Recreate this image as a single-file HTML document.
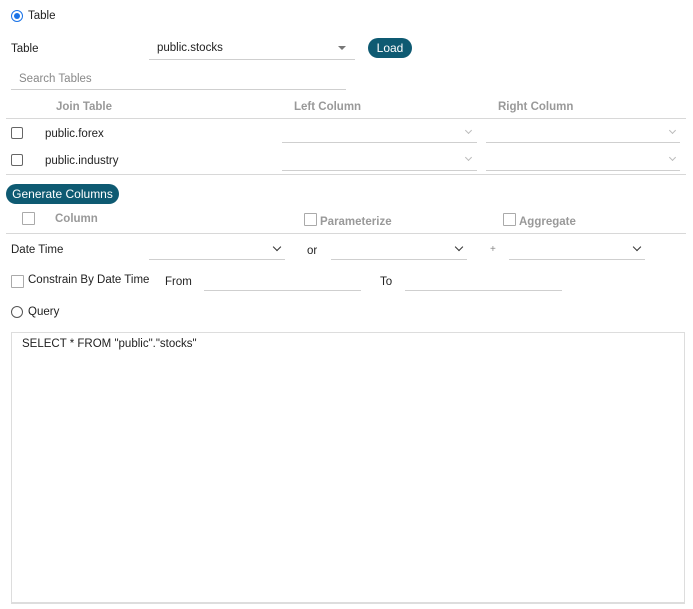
<!DOCTYPE html>
<html><head><style>
body{margin:0;width:693px;height:609px;background:#fff;font-family:"Liberation Sans",sans-serif;font-size:11.5px;color:#222;position:relative;overflow:hidden}
.a{position:absolute;white-space:nowrap;line-height:14px}
.l{position:absolute;height:1px;background:#d8d8d8}
.ul{position:absolute;height:1px;background:#cfcfcf}
.cb{position:absolute;width:10px;height:10px;border:1px solid #666;border-radius:2px;background:#fff}
.cbg{position:absolute;width:11px;height:11px;border:1px solid #aaa;border-radius:1px}
.h{color:#999;font-weight:bold}
.btn{position:absolute;background:#0e5a72;color:#fff;border-radius:10px;text-align:center;font-size:12px;line-height:20px}
.chev{position:absolute;width:5px;height:5px;border-right:1.5px solid #333;border-bottom:1.5px solid #333;transform:rotate(45deg)}
.chl{position:absolute;width:4px;height:4px;border-right:1px solid #bbb;border-bottom:1px solid #bbb;transform:rotate(45deg)}
</style></head><body>
<div style="position:absolute;left:11px;top:10px;width:10px;height:10px;border:1px solid #1a73e8;border-radius:50%"></div>
<div style="position:absolute;left:14px;top:13px;width:6px;height:6px;background:#1a73e8;border-radius:50%"></div>
<div class="a" style="left:28px;top:9px">Table</div>

<div class="a" style="left:11px;top:42px">Table</div>
<div class="a" style="left:157px;top:41px">public.stocks</div>
<div style="position:absolute;left:338px;top:46px;border-left:4px solid transparent;border-right:4px solid transparent;border-top:4px solid #777"></div>
<div class="ul" style="left:149px;top:59px;width:206px"></div>
<div class="btn" style="left:368px;top:38px;width:44px;height:20px">Load</div>

<div class="a" style="left:19px;top:72px;color:#888">Search Tables</div>
<div class="ul" style="left:11px;top:89px;width:335px"></div>

<div class="a h" style="left:56px;top:100px">Join Table</div>
<div class="a h" style="left:294px;top:100px">Left Column</div>
<div class="a h" style="left:498px;top:100px">Right Column</div>
<div class="l" style="left:6px;top:118px;width:680px"></div>

<div class="cb" style="left:11px;top:127px"></div>
<div class="a" style="left:45px;top:127px">public.forex</div>
<div class="ul" style="left:282px;top:142px;width:195px"></div>
<div class="ul" style="left:486px;top:142px;width:194px"></div>
<div class="chl" style="left:466px;top:128px"></div>
<div class="chl" style="left:670px;top:128px"></div>

<div class="cb" style="left:11px;top:154px"></div>
<div class="a" style="left:45px;top:154px">public.industry</div>
<div class="ul" style="left:282px;top:170px;width:195px"></div>
<div class="ul" style="left:486px;top:170px;width:194px"></div>
<div class="chl" style="left:466px;top:155px"></div>
<div class="chl" style="left:670px;top:155px"></div>
<div class="l" style="left:6px;top:174px;width:680px"></div>

<div class="btn" style="left:6px;top:184px;width:113px;height:20px">Generate Columns</div>

<div class="cbg" style="left:22px;top:212px"></div>
<div class="a h" style="left:55px;top:212px">Column</div>
<div class="cbg" style="left:304px;top:213px"></div>
<div class="a h" style="left:320px;top:215px">Parameterize</div>
<div class="cbg" style="left:503px;top:213px"></div>
<div class="a h" style="left:519px;top:215px">Aggregate</div>
<div class="l" style="left:6px;top:233px;width:680px"></div>

<div class="a" style="left:11px;top:243px">Date Time</div>
<div class="ul" style="left:149px;top:259px;width:136px"></div>
<div class="chev" style="left:274px;top:244px"></div>
<div class="a" style="left:307px;top:244px">or</div>
<div class="ul" style="left:331px;top:259px;width:136px"></div>
<div class="chev" style="left:456px;top:244px"></div>
<div class="a" style="left:490px;top:243px;color:#888;font-size:10px">+</div>
<div class="ul" style="left:509px;top:259px;width:136px"></div>
<div class="chev" style="left:634px;top:244px"></div>

<div class="cbg" style="left:11px;top:275px"></div>
<div class="a" style="left:28px;top:273px">Constrain By Date Time</div>
<div class="a" style="left:165px;top:275px">From</div>
<div class="ul" style="left:204px;top:290px;width:157px"></div>
<div class="a" style="left:380px;top:275px">To</div>
<div class="ul" style="left:405px;top:290px;width:157px"></div>

<div style="position:absolute;left:11px;top:306px;width:10px;height:10px;border:1px solid #555;border-radius:50%"></div>
<div class="a" style="left:28px;top:305px">Query</div>

<div style="position:absolute;left:11px;top:332px;width:672px;height:269px;border:1px solid #ddd;border-bottom:2px solid #ddd"></div>
<div class="a" style="left:22px;top:337px">SELECT * FROM "public"."stocks"</div>
</body></html>
